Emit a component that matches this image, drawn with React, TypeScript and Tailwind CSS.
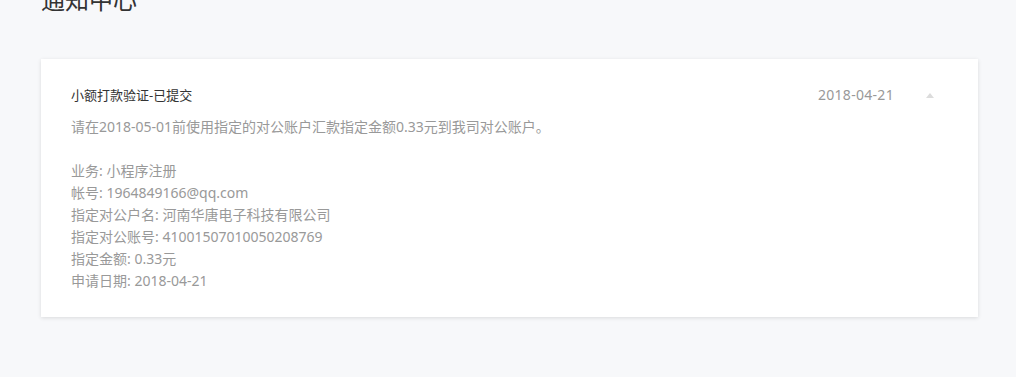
import React from "react";

const font = { fontFamily: '"Noto Sans", "Noto Sans CJK SC", sans-serif' };

export default function App() {
  const lines = [
    "业务: 小程序注册",
    "帐号: 1964849166@qq.com",
    "指定对公户名: 河南华唐电子科技有限公司",
    "指定对公账号: 41001507010050208769",
    "指定金额: 0.33元",
    "申请日期: 2018-04-21",
  ];
  return (
    <div className="flex min-h-[377px] w-[1016px] flex-col bg-[#f7f8fa] pl-[41px] pr-[38px] pb-[40px]" style={font}>
      <h1 className="mt-[-12px] text-[24px] leading-[24px] font-normal text-[#333]">通知中心</h1>
      <div className="mt-[47px] bg-white shadow-[0_1px_4px_rgba(0,0,0,0.12)] pl-[30px] pr-[44px] pt-[25px] pb-[25px]">
        <div className="flex items-center">
          <div className="flex-1 text-[13px] leading-[22px] text-[#333]">小额打款验证-已提交</div>
          <div className="text-[14px] leading-[22px] tracking-[0.3px] text-[#999]">2018-04-21</div>
          <div className="ml-[32px] h-0 w-0 border-l-[4.5px] border-r-[4.5px] border-b-[5px] border-l-transparent border-r-transparent border-b-[#dcdcdc]" />
        </div>
        <div className="mt-[10px] text-[14px] leading-[22px] text-[#999]">
          <div>请在2018-05-01前使用指定的对公账户汇款指定金额0.33元到我司对公账户。</div>
          <div className="h-[22px]" />
          {lines.map((l) => (
            <div key={l}>{l}</div>
          ))}
        </div>
      </div>
    </div>
  );
}
